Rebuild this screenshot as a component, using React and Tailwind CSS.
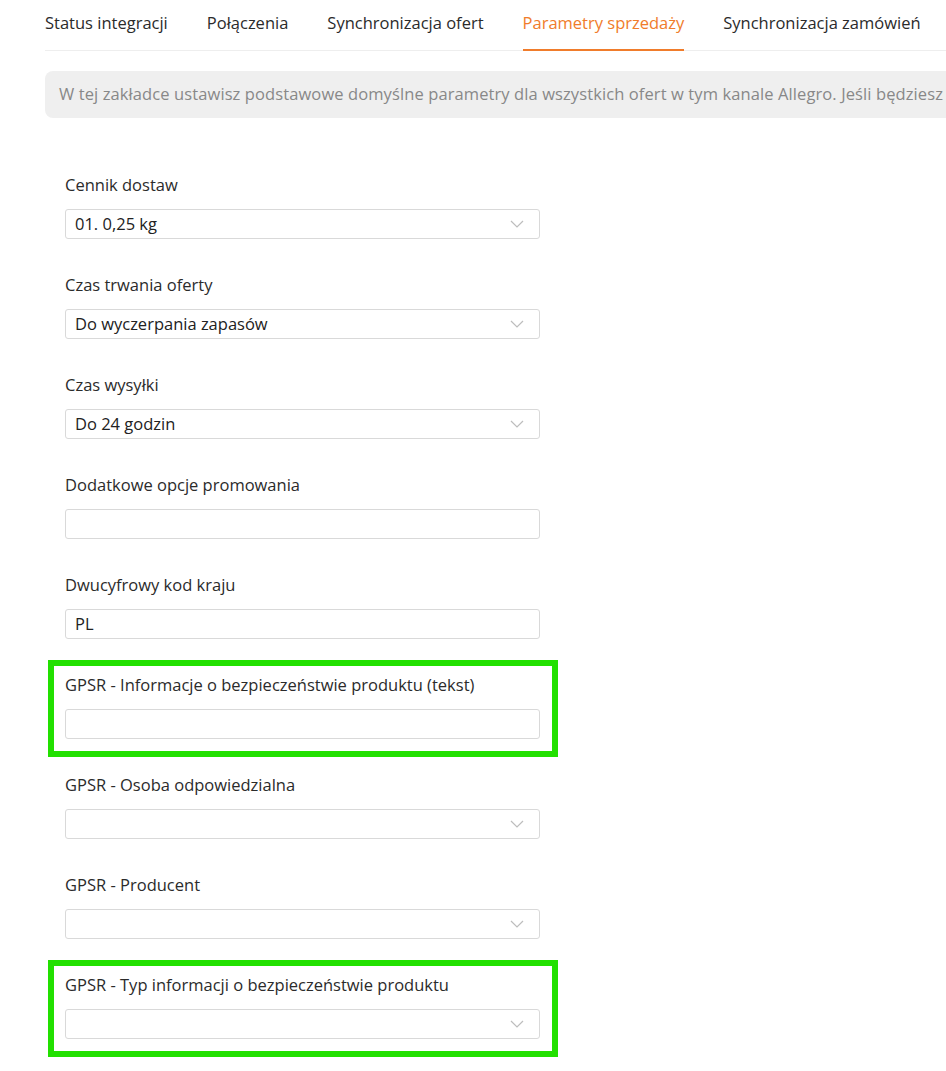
import React from 'react';

const tabs = [
  { label: 'Status integracji' },
  { label: 'Połączenia' },
  { label: 'Synchronizacja ofert' },
  { label: 'Parametry sprzedaży', active: true },
  { label: 'Synchronizacja zamówień' },
];

const fields = [
  { label: 'Cennik dostaw', value: '01. 0,25 kg', select: true },
  { label: 'Czas trwania oferty', value: 'Do wyczerpania zapasów', select: true },
  { label: 'Czas wysyłki', value: 'Do 24 godzin', select: true },
  { label: 'Dodatkowe opcje promowania', value: '' },
  { label: 'Dwucyfrowy kod kraju', value: 'PL' },
  { label: 'GPSR - Informacje o bezpieczeństwie produktu (tekst)', value: '', marked: true },
  { label: 'GPSR - Osoba odpowiedzialna', value: '', select: true },
  { label: 'GPSR - Producent', value: '', select: true },
  { label: 'GPSR - Typ informacji o bezpieczeństwie produktu', value: '', select: true, marked: true },
];

const Chevron = () => (
  <svg width="14" height="8" viewBox="0 0 14 8" fill="none" className="shrink-0">
    <path d="M1 1l6 6 6-6" stroke="#bdbdbd" strokeWidth="1.2" />
  </svg>
);

const Field = ({ label, value, select, marked }) => (
  <div
    className={
      marked
        ? 'w-[510px] h-[97px] mb-[3px] border-[6px] border-[#22e000] px-[11px] pt-[9px]'
        : 'w-[510px] h-[97px] mb-[3px] border-[6px] border-transparent px-[11px] pt-[9px]'
    }
  >
    <div className="text-[16.5px] leading-[20px] text-[#2b2b2b]">{label}</div>
    <div className="mt-[14px] h-[30px] w-[475px] border border-[#d9d9d9] rounded-[3px] bg-white flex items-center justify-between pl-[9px] pr-[15px]">
      <span className="text-[16.5px] text-[#222]">{value}</span>
      {select && <Chevron />}
    </div>
  </div>
);

const App = () => {
  return (
    <div className="w-[946px] min-h-[1071px] overflow-hidden bg-white" style={{ fontFamily: '"Open Sans", "Noto Sans", sans-serif' }}>
      <div className="w-[1300px] pl-[45px]">
        <div className="flex gap-[39px] border-b border-[#eeeeee] h-[51px]">
          {tabs.map((t) => (
            <div
              key={t.label}
              className={
                t.active
                  ? 'pt-[12px] text-[16.5px] leading-[22px] text-[#f07c2b] border-b-2 border-[#f07c2b] h-[51px] -mb-px'
                  : 'pt-[12px] text-[16.5px] leading-[22px] text-[#2b2b2b]'
              }
            >
              {t.label}
            </div>
          ))}
        </div>
        <div className="mt-[20px] h-[47px] bg-[#efefef] rounded-[8px] flex items-center pl-[14px] text-[16.5px] tracking-[0.1px] text-[#888] whitespace-nowrap">
          W tej zakładce ustawisz podstawowe domyślne parametry dla wszystkich ofert w tym kanale Allegro. Jeśli będziesz
        </div>
        <div className="mt-[42px] ml-[3px]">
          {fields.map((f) => (
            <Field key={f.label} {...f} />
          ))}
        </div>
      </div>
    </div>
  );
};

export default App;
